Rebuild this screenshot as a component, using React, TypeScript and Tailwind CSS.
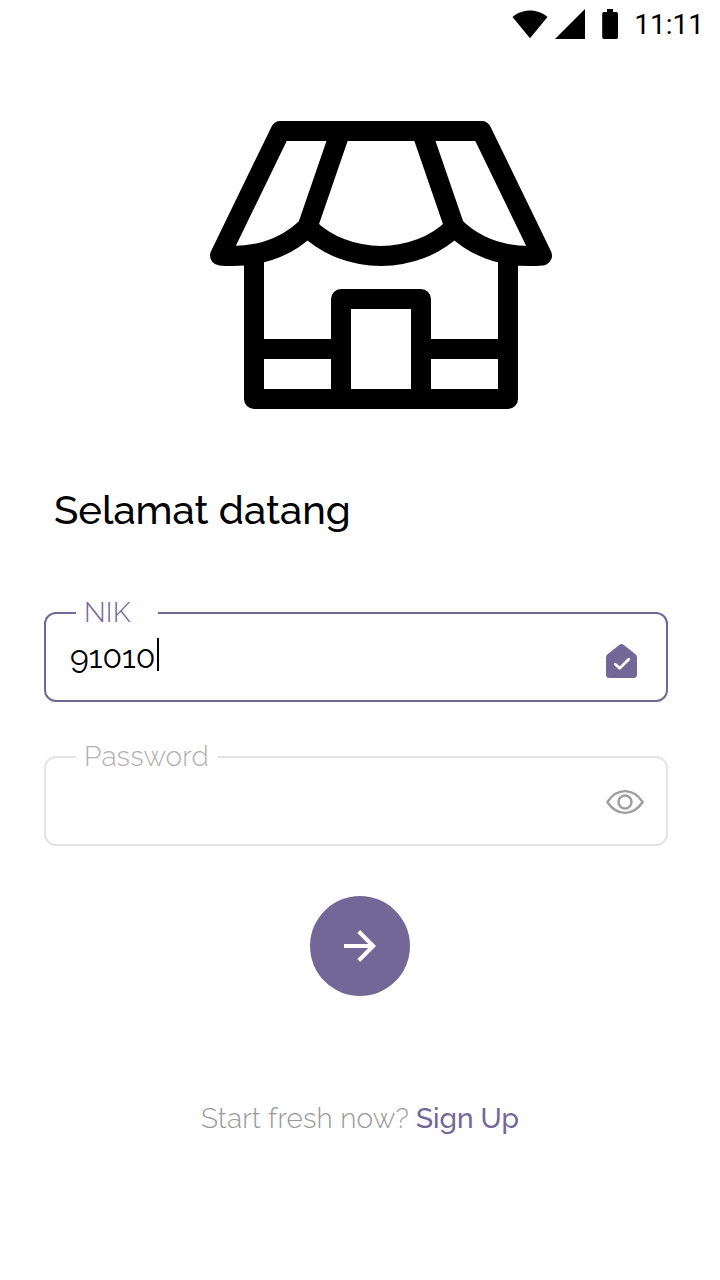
import type { ReactNode } from 'react';

function StatusBar() {
  return (
    <header className="flex h-12 items-start justify-end pr-4">
      <svg className="h-12 w-[122px]" viewBox="510 0 122 48" fill="#000">
        <path d="M512.5 17C522 8.2 538 8.2 547.5 17L530 38.3Z" />
        <path d="M555 39L585 9V39Z" />
        <path d="M607 9H613V12H616.3Q618 12 618 13.8V37.2Q618 39 616.3 39H603.9Q602.2 39 602.2 37.2V13.8Q602.2 12 603.9 12H607Z" />
      </svg>
      <span className="ml-[2px] mt-[9px] font-[Roboto,sans-serif] text-[28px] leading-8">11:11</span>
    </header>
  );
}

function Shop() {
  return (
    <svg
      className="ml-[200px] mt-[62px] h-[310px] w-[360px]"
      viewBox="200 110 360 310"
      fill="none"
      stroke="#000"
      strokeWidth="20"
      strokeLinejoin="round"
    >
      <path d="M220 255.5L280.5 131H481.5L542 255.5C511 258 479 251 454.500 227C416 265.500 346 265.500 307.500 227C283 251 251 258 220 255.500Z" />
      <path d="M340.500 131L308.500 224M421.500 131L453.500 224" strokeLinecap="round" />
      <path d="M254 254V399H508V254M341 399V299H421V399M254 349H341M421 349H508" />
    </svg>
  );
}

type FieldProps = { label: string; tone: string; legend: string; children: ReactNode };

function Field({ label, tone, legend, children }: FieldProps) {
  return (
    <fieldset className={`h-[105px] w-[624px] rounded-xl border-2 pl-[30px] ${tone}`}>
      <legend className={`h-8 whitespace-nowrap pl-[8px] text-[28px] leading-8 ${legend}`}>{label}</legend>
      {children}
    </fieldset>
  );
}

export default function App() {
  return (
    <main className="h-[1280px] w-[720px] overflow-hidden bg-white font-[Raleway,Lato,sans-serif] text-black">
      <StatusBar />
      <Shop />
      <h1 className="ml-[54px] mt-[66px] h-12 whitespace-nowrap text-[40px] font-medium leading-[48px]">Selamat datang</h1>

      <form className="ml-11 mt-[63px] flex flex-col gap-[39px]">
        <Field label="NIK" tone="border-[#716898]" legend="w-[82px] font-light tracking-[0.2px] text-[#716898]">
          <div className="flex h-[71px] items-start">
            <div className="-ml-[6px] mt-[9px] flex h-[33px] items-center text-[32px] leading-[33px]">
              <span className="mr-[2px] pt-1">91010</span>
              <span className="h-[33px] w-[2px] bg-black" />
            </div>
            <svg className="ml-auto mr-[28px] mt-[14px] h-9 w-[34px]" viewBox="604 643 34 36">
              <path d="M619.500 644.700Q621.500 643.200 623.500 644.700L635.500 654.200Q637 655.500 637 657.500V674.500Q637 678 633.500 678H609.500Q606 678 606 674.500V657.500Q606 655.500 607.500 654.200Z" fill="#716898" />
              <path d="M615.200 664.200L619.700 668.300L628.800 659.200" fill="none" stroke="#fff" strokeWidth="2.800" strokeLinecap="round" strokeLinejoin="round" />
            </svg>
          </div>
        </Field>
        <Field label="Password" tone="border-[#e3e3e3]" legend="w-[142px] font-light tracking-[0.15px] text-[#b0b0b0]">
          <div className="flex h-[71px] items-start justify-end">
            <svg className="mr-[21px] mt-[15px] h-7 w-10" viewBox="605 788 40 28" fill="none" stroke="#9e9e9e" strokeWidth="2.400">
              <path d="M607.300 802C617 787.500 633 787.500 642.700 802C633 816.500 617 816.500 607.300 802Z" strokeLinejoin="round" />
              <circle cx="625" cy="802" r="6.500" />
            </svg>
          </div>
        </Field>
      </form>

      <button type="button" aria-label="Continue" className="mx-auto mt-[50px] flex size-[100px] items-center justify-center rounded-full bg-[#716898]">
        <svg className="size-10" viewBox="340 926 40 40" fill="none" stroke="#fff" strokeWidth="4">
          <path d="M344 946H373M358.700 931.500L373.200 946L358.700 960.500" />
        </svg>
      </button>

      <p className="ml-[201px] mt-[105px] flex h-9 whitespace-nowrap text-[28px] leading-9">
        <span className="w-[215px] font-light tracking-[0.15px] text-[#999]">Start fresh now?</span>
        <span className="font-medium text-[#716898]">Sign Up</span>
      </p>
    </main>
  );
}
